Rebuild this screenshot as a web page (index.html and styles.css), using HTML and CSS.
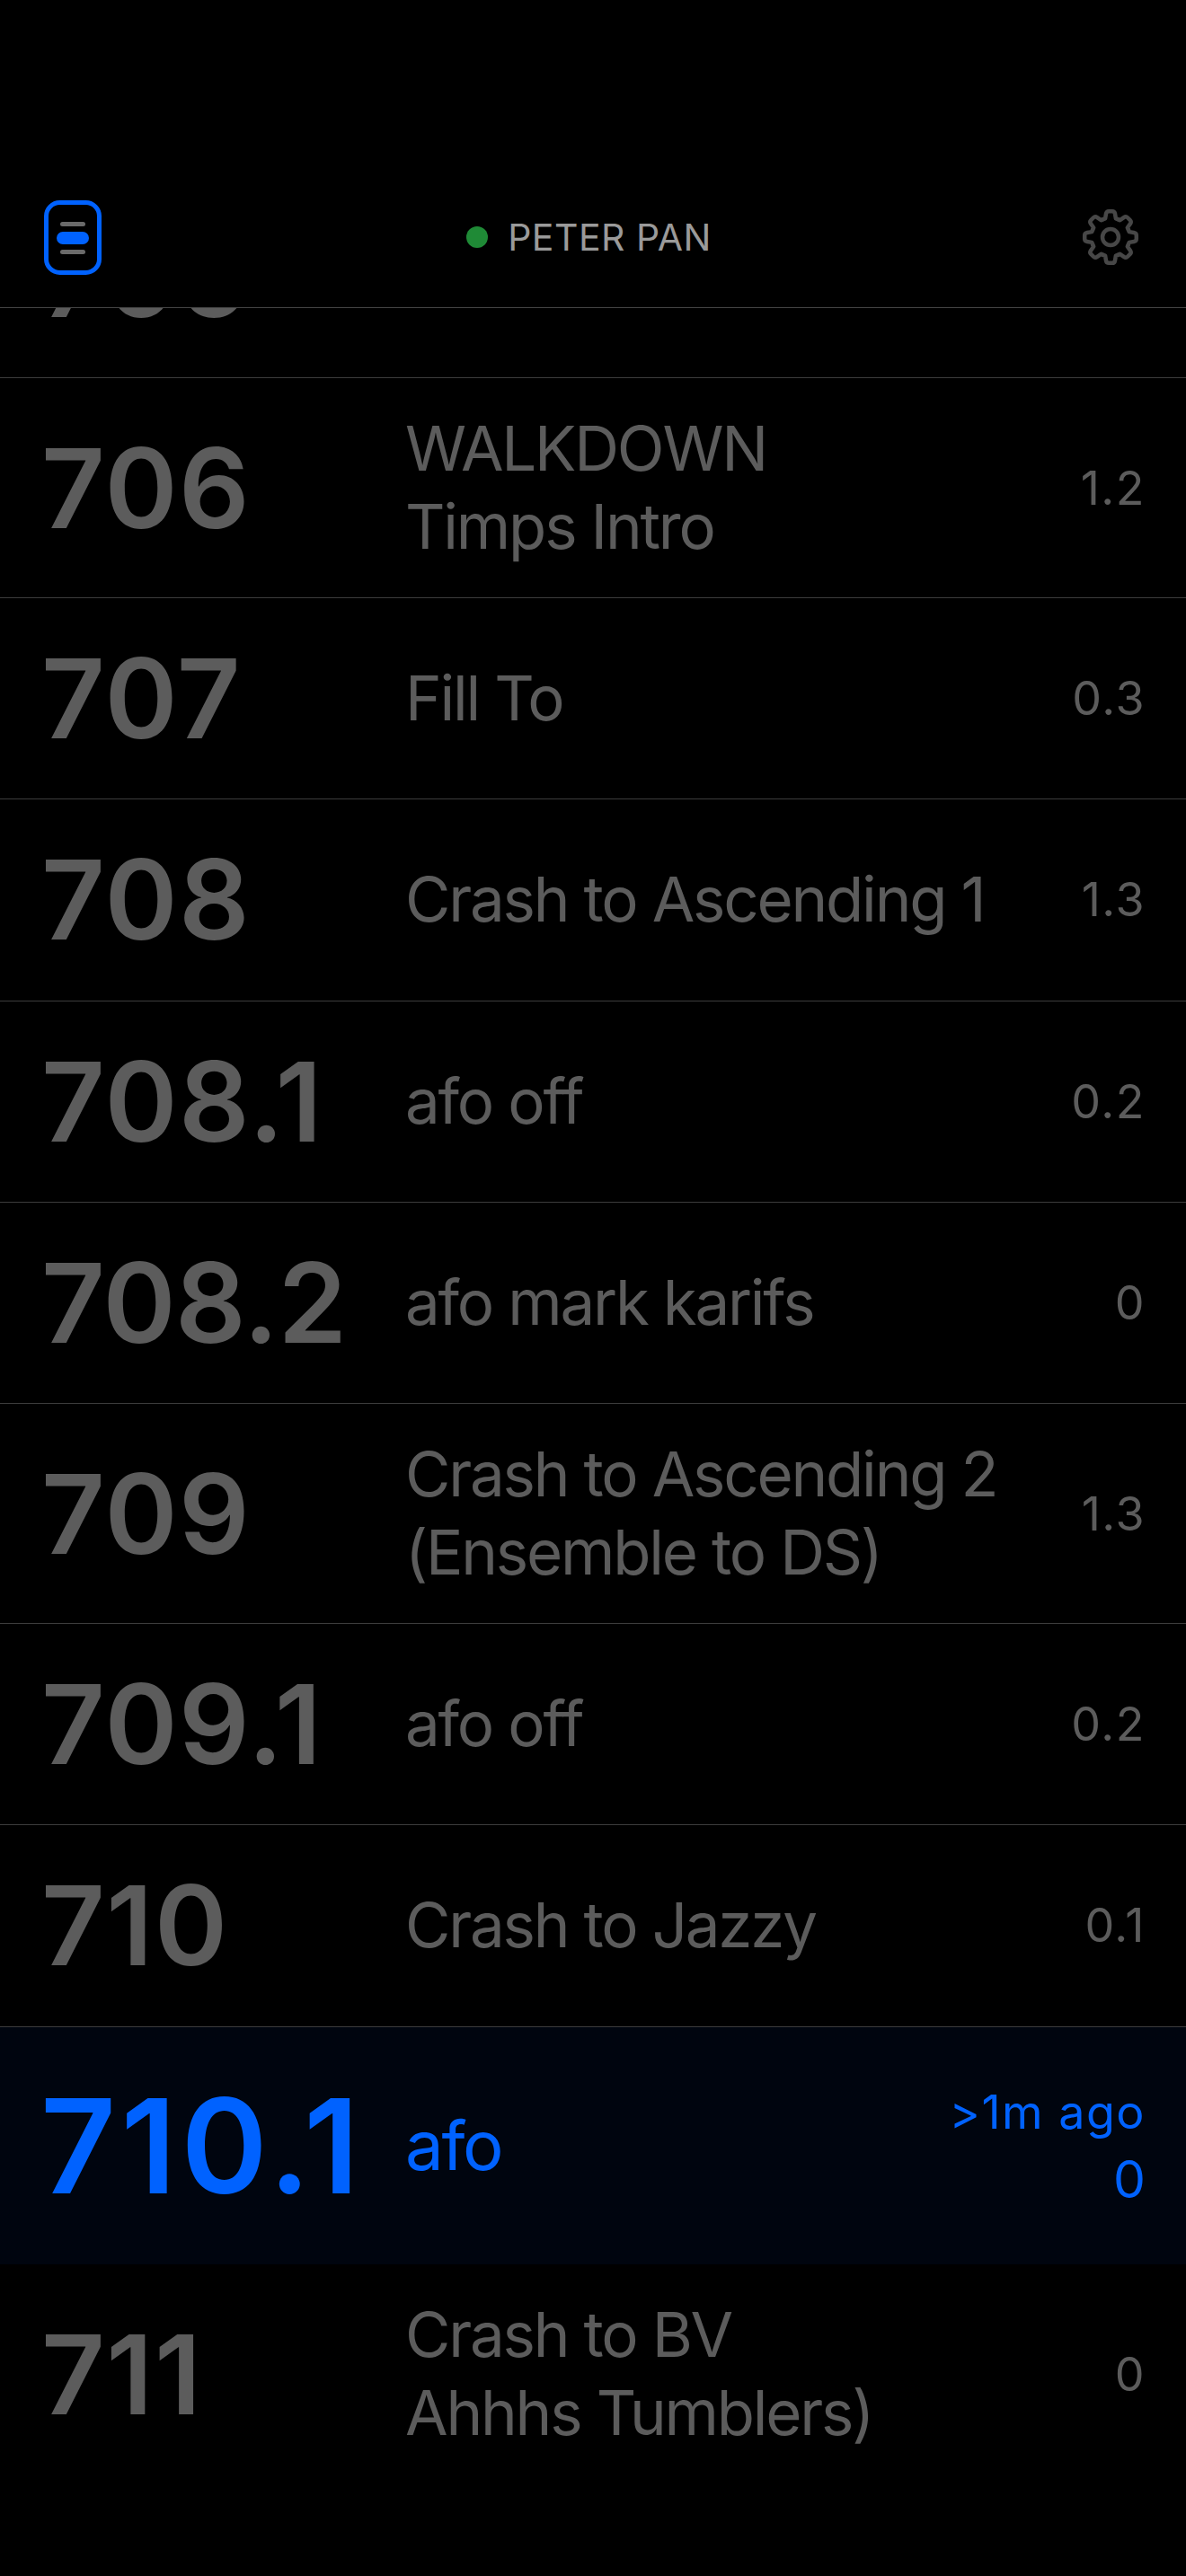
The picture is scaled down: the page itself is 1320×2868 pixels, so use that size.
FILE: index.html
```html
<!DOCTYPE html>
<html lang="en">
<head>
    <meta charset="UTF-8">
    <meta name="viewport" content="width=device-width, initial-scale=1.0">
    <title>Peter Pan Cues</title>
    <link rel="stylesheet" href="styles.css">
</head>
<body>
    <header class="topbar">
        <svg class="view-icon" width="64" height="83" viewBox="0 0 64 83" fill="none">
            <rect x="2.5" y="2.5" width="59" height="78" rx="15" stroke="#0062ff" stroke-width="5"/>
            <rect x="18" y="24" width="28" height="5" rx="2.5" fill="#6a6a6a"/>
            <rect x="14" y="35" width="36" height="14" rx="7" fill="#0062ff"/>
            <rect x="18" y="55" width="28" height="5" rx="2.5" fill="#6a6a6a"/>
        </svg>
        <div class="show">
            <span class="show-dot"></span>
            <span class="show-name">PETER PAN</span>
        </div>
        <svg class="gear" width="64" height="64" viewBox="-32 -32 64 64" fill="none" stroke="#474747" stroke-width="4.5" stroke-linecap="round" stroke-linejoin="round">
            <defs>
                <path id="tooth" d="M-8.2-19.9L-5.9-20.7L-5-26Q-4.5-28.8-2-28.8L2-28.8Q4.5-28.8 5-26L5.9-20.7L8.2-19.9"/>
            </defs>
            <circle r="9"/>
            <use href="#tooth"/>
            <use href="#tooth" transform="rotate(45)"/>
            <use href="#tooth" transform="rotate(90)"/>
            <use href="#tooth" transform="rotate(135)"/>
            <use href="#tooth" transform="rotate(180)"/>
            <use href="#tooth" transform="rotate(225)"/>
            <use href="#tooth" transform="rotate(270)"/>
            <use href="#tooth" transform="rotate(315)"/>
        </svg>
    </header>

    <main class="cues">
        <div class="cue cue-scrolled">
            <div class="cue-num">705</div>
            <div class="cue-label"></div>
            <div class="cue-time"></div>
        </div>
        <div class="cue cue-tall">
            <div class="cue-num">706</div>
            <div class="cue-label">WALKDOWN<br>Timps Intro</div>
            <div class="cue-time">1.2</div>
        </div>
        <div class="cue">
            <div class="cue-num">707</div>
            <div class="cue-label">Fill To</div>
            <div class="cue-time">0.3</div>
        </div>
        <div class="cue">
            <div class="cue-num">708</div>
            <div class="cue-label">Crash to Ascending 1</div>
            <div class="cue-time">1.3</div>
        </div>
        <div class="cue">
            <div class="cue-num">708.1</div>
            <div class="cue-label">afo off</div>
            <div class="cue-time">0.2</div>
        </div>
        <div class="cue">
            <div class="cue-num cue-num-tight">708.2</div>
            <div class="cue-label">afo mark karifs</div>
            <div class="cue-time">0</div>
        </div>
        <div class="cue cue-tall">
            <div class="cue-num">709</div>
            <div class="cue-label">Crash to Ascending 2<br>(Ensemble to DS)</div>
            <div class="cue-time">1.3</div>
        </div>
        <div class="cue">
            <div class="cue-num">709.1</div>
            <div class="cue-label">afo off</div>
            <div class="cue-time">0.2</div>
        </div>
        <div class="cue">
            <div class="cue-num">710</div>
            <div class="cue-label">Crash to Jazzy</div>
            <div class="cue-time">0.1</div>
        </div>
        <div class="cue cue-active">
            <div class="cue-num">710.1</div>
            <div class="cue-label">afo</div>
            <div class="cue-time">
                <div class="cue-ago">&gt;1m ago</div>
                <div class="cue-left">0</div>
            </div>
        </div>
        <div class="cue cue-tall cue-last">
            <div class="cue-num">711</div>
            <div class="cue-label">Crash to BV<br>Ahhhs Tumblers)</div>
            <div class="cue-time">0</div>
        </div>
    </main>
</body>
</html>
```

FILE: styles.css
```css
html, body {
    margin: 0;
    padding: 0;
    background-color: #000;
}

body {
    width: 1320px;
    height: 2868px;
    overflow: hidden;
    font-family: Inter, "Liberation Sans", sans-serif;
}

.topbar {
    display: flex;
    justify-content: space-between;
    align-items: center;
    height: 156px;
    padding: 186px 52px 0 49px;
    border-bottom: 1px solid #444;
}

.show {
    display: flex;
    align-items: center;
    gap: 22px;
    margin-right: 6px;
}

.show-dot {
    width: 24px;
    height: 24px;
    border-radius: 50%;
    background-color: #1f8a36;
}

.show-name {
    font-size: 41px;
    letter-spacing: 0.5px;
    color: #9a9a9a;
}

.cues {
    height: 2525px;
    overflow: hidden;
}

.cue {
    display: flex;
    align-items: center;
    height: 224.25px;
    box-sizing: border-box;
    padding: 0 45px 0 46px;
    border-bottom: 1px solid #3c3c3c;
    color: #5c5c5c;
}

.cue-tall {
    height: 245px;
}

.cue-scrolled {
    height: 224px;
    margin-top: -146px;
}

.cue-active {
    height: 264px;
    border-bottom: none;
    background-color: #00050f;
    color: #0062ff;
}

.cue-last {
    border-bottom: none;
}

.cue-num {
    width: 405px;
    flex-shrink: 0;
    font-size: 123px;
    font-weight: 600;
    letter-spacing: 1.5px;
}

.cue-num-tight {
    letter-spacing: -0.5px;
}

.cue-label {
    flex: 1;
    font-size: 69px;
    line-height: 87px;
    letter-spacing: -2.2px;
}

.cue-time {
    font-size: 52px;
    letter-spacing: 1.5px;
    text-align: right;
}

.cue-active .cue-num {
    width: 406px;
    margin-left: -1px;
    font-size: 146px;
    letter-spacing: 5.3px;
}

.cue-active .cue-label {
    font-size: 76px;
    letter-spacing: -2.3px;
}

.cue-ago {
    line-height: 75px;
    letter-spacing: 1.5px;
}

.cue-left {
    font-size: 57px;
    line-height: 75px;
    letter-spacing: 0;
}
```
